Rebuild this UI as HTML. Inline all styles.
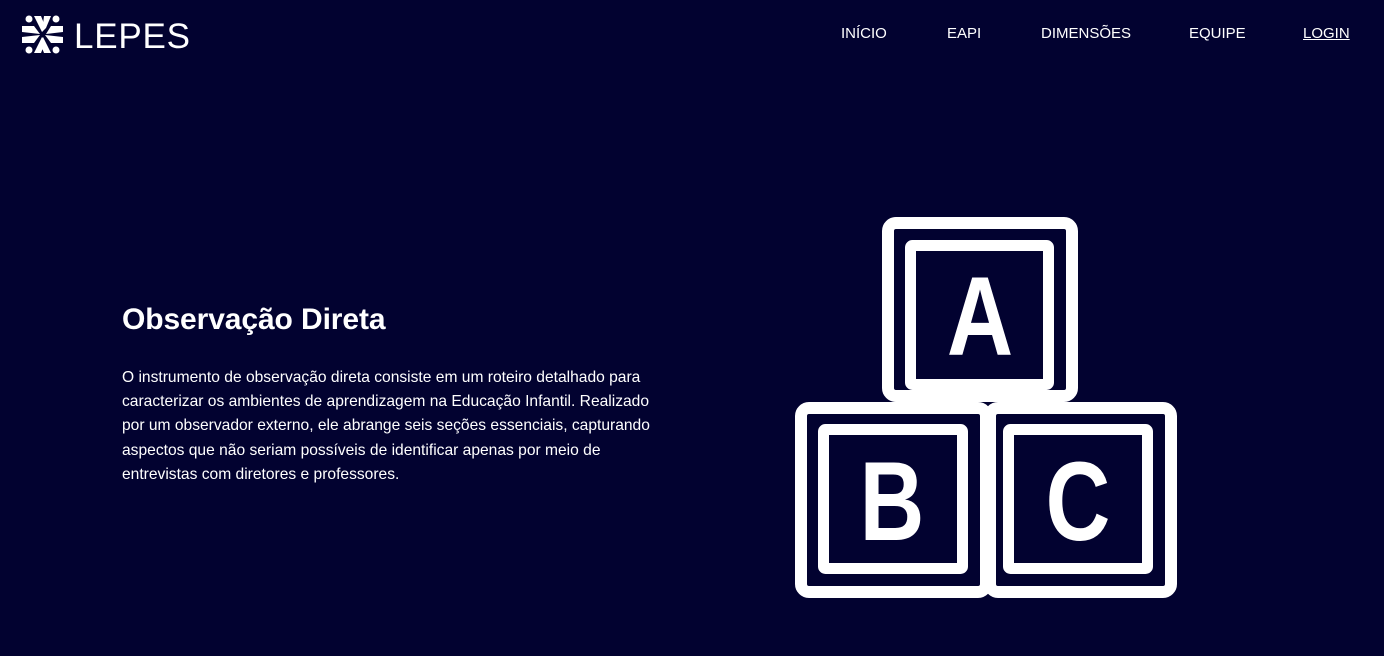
<!DOCTYPE html>
<html><head><meta charset="utf-8"><style>
*{margin:0;padding:0;box-sizing:border-box}
body{width:1384px;height:656px;background:#020230;color:#fff;font-family:"Liberation Sans",sans-serif;overflow:hidden;position:relative}
.nav a{position:absolute;top:25px;color:#fff;text-decoration:none;font-size:15px}
h1{position:absolute;left:122px;top:303px;font-size:30px;font-weight:bold;letter-spacing:-0.1px}
p{position:absolute;left:122px;top:366px;font-size:15.6px;line-height:24.2px;white-space:nowrap}
</style></head><body>
<svg style="position:absolute;left:20px;top:12px" width="175" height="46" viewBox="0 0 175 46">
<g fill="#fff">
<circle cx="9" cy="7" r="3.5"/><circle cx="36" cy="7" r="3.5"/><circle cx="9" cy="38" r="3.5"/><circle cx="36" cy="38" r="3.5"/>
<path d="M14 4 L21 4 L25 14 L22 20 Z"/><path d="M2 14 L14 14 L20 22 L2 20 Z"/>
<path d="M24 4 L31 4 L26 16 L22 20 Z"/><path d="M43 14 L43 20 L26 22 L31 14 Z"/>
<path d="M2 25 L20 23 L14 31 L2 31 Z"/><path d="M22 25 L25 31 L21 41 L14 41 Z"/>
<path d="M43 25 L43 31 L31 31 L25 23 Z"/><path d="M23 25 L31 41 L24 41 L20 31 Z"/>
</g>
<text x="54" y="36" font-family="Liberation Sans,sans-serif" font-size="35" fill="#fff" textLength="116">LEPES</text>
</svg>
<div class="nav">
<a style="left:841px">INÍCIO</a>
<a style="left:947px">EAPI</a>
<a style="left:1041px">DIMENSÕES</a>
<a style="left:1189px">EQUIPE</a>
<a style="left:1303px;text-decoration:underline">LOGIN</a>
</div>
<h1>Observação Direta</h1>
<p>O instrumento de observação direta consiste em um roteiro detalhado para<br>caracterizar os ambientes de aprendizagem na Educação Infantil. Realizado<br>por um observador externo, ele abrange seis seções essenciais, capturando<br>aspectos que não seriam possíveis de identificar apenas por meio de<br>entrevistas com diretores e professores.</p>
<svg style="position:absolute;left:0;top:0" width="1384" height="656">
<g fill="none" stroke="#fff">
<rect x="888" y="223" width="184" height="173" rx="8" stroke-width="12"/>
<rect x="910.5" y="245.5" width="138" height="139" rx="2" stroke-width="11"/>
<rect x="801" y="408" width="185" height="184" rx="8" stroke-width="12"/>
<rect x="823.5" y="429.5" width="139" height="139" rx="2" stroke-width="11"/>
<rect x="990" y="408" width="181" height="184" rx="8" stroke-width="12"/>
<rect x="1008.5" y="429.5" width="139" height="139" rx="2" stroke-width="11"/>
</g>
<g fill="#fff" font-family="Liberation Sans,sans-serif" font-weight="bold" font-size="112" text-anchor="middle">
<text transform="translate(980,355) scale(0.82,1)">A</text>
<text transform="translate(892,540) scale(0.8,1)">B</text>
<text transform="translate(1078,540) scale(0.8,1)">C</text>
</g>
</svg>
</body></html>
